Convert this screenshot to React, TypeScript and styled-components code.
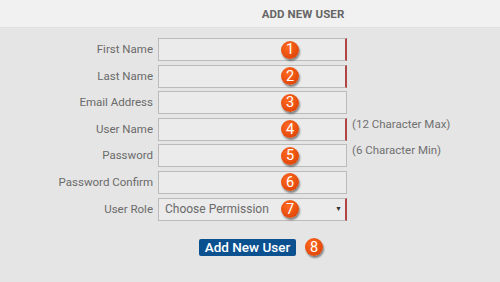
import React from "react";
import styled, { createGlobalStyle } from "styled-components";

const Global = createGlobalStyle`
  html, body { margin: 0; padding: 0; background: #e5e5e5; }
  body { font-family: Roboto, "Liberation Sans", sans-serif; }
`;

const Page = styled.div`
  width: 500px;
  height: 282px;
  background: #e5e5e5;
  overflow: hidden;
`;

const Header = styled.div`
  height: 28px;
  background: #f1f1f1;
  border-bottom: 1px solid #e0e0e0;
  display: flex;
  align-items: center;
  justify-content: center;
  padding-left: 106px;
  box-sizing: border-box;
  font-size: 11.5px;
  font-weight: 700;
  color: #666;
  letter-spacing: 0.1px;
`;

const Form = styled.div`
  display: grid;
  grid-template-columns: 153px 189px auto;
  column-gap: 5px;
  row-gap: 3.6px;
  padding-top: 10px;
`;

const Label = styled.div`
  grid-column: 1;
  font-size: 11.5px;
  color: #6a6a6a;
  text-align: right;
  line-height: 23px;
  height: 23px;
`;

const Field = styled.div<{ $required?: boolean }>`
  grid-column: 2;
  position: relative;
  height: 23px;
  box-sizing: border-box;
  background: #ebebeb;
  border: 1px solid #bbb;
  border-right: ${(p) => (p.$required ? "2px solid #b04545" : "1px solid #bbb")};
  display: flex;
  align-items: center;
  padding: 0 6px;
  font-size: 12px;
  color: #6a6a6a;
`;

const Caret = styled.span`
  margin-left: auto;
  font-size: 7px;
  color: #333;
  margin-right: -3px;
`;

const Hint = styled.div`
  grid-column: 3;
  font-size: 11.5px;
  color: #707070;
  line-height: 12px;
`;

const Badge = styled.span<{ $inline?: boolean }>`
  position: ${(p) => (p.$inline ? "static" : "absolute")};
  left: 122px;
  top: 50%;
  transform: ${(p) => (p.$inline ? "none" : "translateY(-50%)")};
  width: 18px;
  height: 18px;
  border-radius: 50%;
  background: radial-gradient(circle at 40% 35%, #ff6a1f, #e2480a 70%);
  box-shadow: 1px 2px 2px rgba(0, 0, 0, 0.45);
  color: #fff;
  font-size: 14.5px;
  font-weight: 400;
  display: inline-flex;
  align-items: center;
  justify-content: center;
  flex-shrink: 0;
`;

const Actions = styled.div`
  grid-column: 2 / span 2;
  display: flex;
  align-items: center;
  gap: 9px;
  margin-top: 14px;
  padding-left: 41px;
`;

const Button = styled.button`
  height: 17px;
  width: 97px;
  padding: 0;
  border: none;
  border-radius: 2px;
  background: #0b5190;
  color: #fff;
  font-family: Roboto, "Liberation Sans", sans-serif;
  font-size: 13.5px;
  font-weight: 500;
  line-height: 17px;
`;

const rows: { label: string; required?: boolean; hint?: string; select?: boolean }[] = [
  { label: "First Name", required: true },
  { label: "Last Name", required: true },
  { label: "Email Address" },
  { label: "User Name", required: true, hint: "(12 Character Max)" },
  { label: "Password", hint: "(6 Character Min)" },
  { label: "Password Confirm" },
  { label: "User Role", required: true, select: true },
];

export default function App() {
  return (
    <Page>
      <Global />
      <Header>ADD NEW USER</Header>
      <Form>
        {rows.map((r, i) => (
          <React.Fragment key={r.label}>
            <Label>{r.label}</Label>
            <Field $required={r.required}>
              {r.select && (
                <>
                  Choose Permission
                  <Caret>▼</Caret>
                </>
              )}
              <Badge>{i + 1}</Badge>
            </Field>
            <Hint>{r.hint}</Hint>
          </React.Fragment>
        ))}
        <Actions>
          <Button>Add New User</Button>
          <Badge $inline>8</Badge>
        </Actions>
      </Form>
    </Page>
  );
}
